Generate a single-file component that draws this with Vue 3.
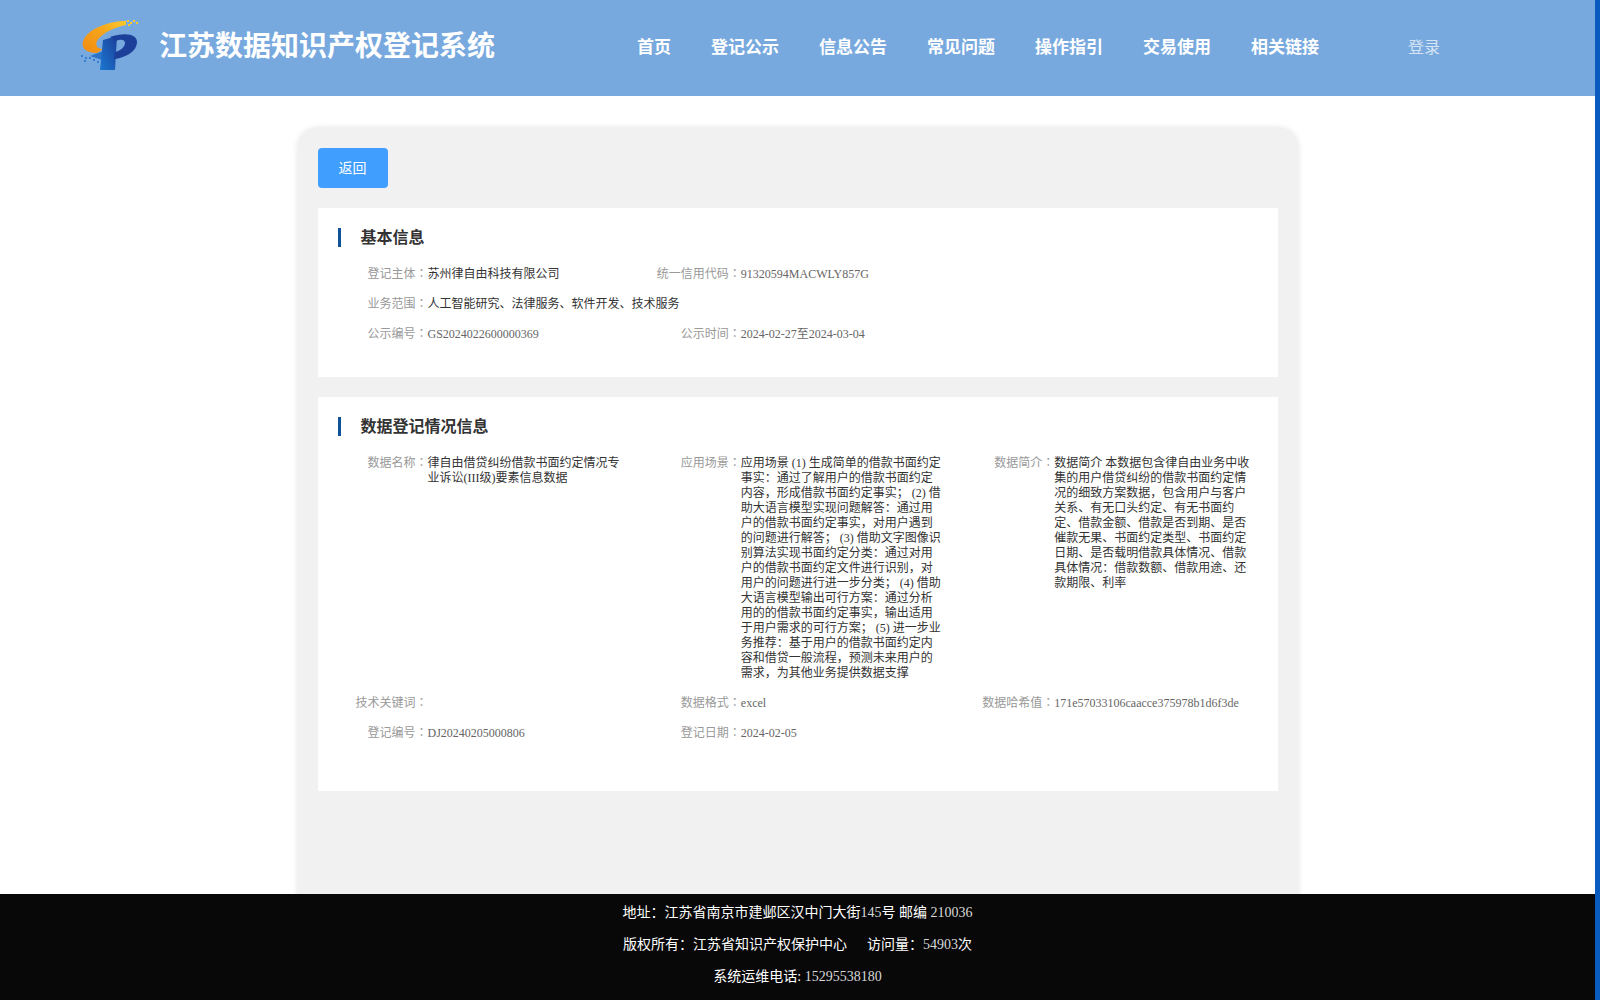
<template>
  <div class="page">
    <div class="main">
      <header class="header">
        <svg class="logo" width="80" height="70" viewBox="0 0 80 70">
          <defs>
            <linearGradient id="swoosh" x1="0" y1="1" x2="1" y2="0">
              <stop offset="0" stop-color="#f08a12" />
              <stop offset="0.6" stop-color="#f6a71c" />
              <stop offset="1" stop-color="#fbcb2c" />
            </linearGradient>
            <linearGradient id="pblue" x1="0" y1="1" x2="1" y2="0">
              <stop offset="0" stop-color="#1a78d0" />
              <stop offset="1" stop-color="#1c3f9a" />
            </linearGradient>
          </defs>
          <path d="M56 11C40 11 18 18 13 31C11 38 16 43 27 43L33 39C28 39 25 36 27 31C31 24 42 18 56 15Z" fill="url(#swoosh)" />
          <path d="M20 46L33 41L32 50Z" fill="#2b74c8" />
          <path d="M33 30L47 26L45 60H30Z" fill="url(#pblue)" />
          <path d="M40 27C55 22 68 24 67 33C66 42 55 48 44 49L45 42C50 41 55 37 55 33C55 29 50 29 46 31Z" fill="#1c3f9a" />
          <g fill="#fbcb2c">
            <rect x="57" y="10" width="2" height="2" />
            <rect x="60" y="12" width="2" height="2" />
            <rect x="63" y="10" width="2" height="2" />
            <rect x="66" y="12" width="2" height="2" />
            <rect x="58" y="14" width="2" height="2" />
          </g>
          <g fill="#2f7fd6">
            <rect x="11" y="45" width="2" height="2" />
            <rect x="15" y="47" width="2" height="2" />
            <rect x="19" y="47" width="2" height="2" />
            <rect x="23" y="49" width="2" height="2" />
            <rect x="14" y="50" width="2" height="2" />
            <rect x="27" y="51" width="2" height="2" />
          </g>
        </svg>
        <h1 class="site-title">江苏数据知识产权登记系统</h1>
        <nav class="nav">
          <a v-for="item in navItems" :key="item" class="nav-item">{{ item }}</a>
        </nav>
        <a class="login">登录</a>
      </header>

      <div class="content">
        <div class="card">
          <button class="back-btn">返回</button>

          <section class="panel">
            <h2 class="panel-title">基本信息</h2>
            <div class="rows">
              <div v-for="(cell, index) in basicInfo" :key="index" class="cell" :class="{ wide: cell.wide, 'new-row': cell.newRow }">
                <span class="label">{{ cell.label }}<span class="colon">：</span></span>
                <span class="value" :class="{ muted: cell.muted }">{{ cell.value }}</span>
              </div>
            </div>
          </section>

          <section class="panel panel-data">
            <h2 class="panel-title">数据登记情况信息</h2>
            <div class="rows">
              <div v-for="(cell, index) in dataInfo" :key="index" class="cell">
                <span class="label">{{ cell.label }}<span class="colon">：</span></span>
                <span class="value" :class="{ muted: cell.muted }">{{ cell.value }}</span>
              </div>
            </div>
          </section>
        </div>
      </div>

      <footer class="footer">
        <p>地址：江苏省南京市建邺区汉中门大街<span class="num">145</span>号 邮编 <span class="num">210036</span></p>
        <p>版权所有：江苏省知识产权保护中心<span class="visits">访问量：<span class="num">54903</span>次</span></p>
        <p>系统运维电话: <span class="num">15295538180</span></p>
      </footer>
    </div>
    <div class="edge"></div>
  </div>
</template>

<script setup>
const navItems = ['首页', '登记公示', '信息公告', '常见问题', '操作指引', '交易使用', '相关链接'];

const basicInfo = [
  { label: '登记主体', value: '苏州律自由科技有限公司' },
  { label: '统一信用代码', value: '91320594MACWLY857G', muted: true },
  { label: '业务范围', value: '人工智能研究、法律服务、软件开发、技术服务', wide: true, newRow: true },
  { label: '公示编号', value: 'GS2024022600000369', newRow: true, muted: true },
  { label: '公示时间', value: '2024-02-27至2024-03-04', muted: true }
];

const dataInfo = [
  { label: '数据名称', value: '律自由借贷纠纷借款书面约定情况专业诉讼(III级)要素信息数据' },
  {
    label: '应用场景',
    value: '应用场景 (1) 生成简单的借款书面约定事实：通过了解用户的借款书面约定内容，形成借款书面约定事实； (2) 借助大语言模型实现问题解答：通过用户的借款书面约定事实，对用户遇到的问题进行解答； (3) 借助文字图像识别算法实现书面约定分类：通过对用户的借款书面约定文件进行识别，对用户的问题进行进一步分类； (4) 借助大语言模型输出可行方案：通过分析用的的借款书面约定事实，输出适用于用户需求的可行方案； (5) 进一步业务推荐：基于用户的借款书面约定内容和借贷一般流程，预测未来用户的需求，为其他业务提供数据支撑'
  },
  {
    label: '数据简介',
    value: '数据简介 本数据包含律自由业务中收集的用户借贷纠纷的借款书面约定情况的细致方案数据，包含用户与客户关系、有无口头约定、有无书面约定、借款金额、借款是否到期、是否催款无果、书面约定类型、书面约定日期、是否载明借款具体情况、借款具体情况：借款数额、借款用途、还款期限、利率'
  },
  { label: '技术关键词', value: '' },
  { label: '数据格式', value: 'excel', muted: true },
  { label: '数据哈希值', value: '171e57033106caacce375978b1d6f3de', muted: true },
  { label: '登记编号', value: 'DJ20240205000806', muted: true },
  { label: '登记日期', value: '2024-02-05', muted: true }
];
</script>

<style scoped>
.page {
  display: flex;
  height: 100vh;
  overflow: hidden;
  font-family: "Liberation Serif", "Noto Sans CJK SC", serif;
}

.main {
  position: relative;
  flex: 1;
  min-width: 0;
  background: #fff;
}

.edge {
  width: 5px;
  background: #0a5bc0;
}

.header {
  display: flex;
  align-items: center;
  height: 96px;
  padding: 0 0 6px 70px;
  box-sizing: border-box;
  background: #78a9de;
  color: #fff;
}

.logo {
  flex-shrink: 0;
}

.site-title {
  margin: 0 0 2px 9px;
  font-size: 28px;
  font-weight: 700;
  white-space: nowrap;
}

.nav {
  display: flex;
  gap: 40px;
  margin: 0 0 0 142px;
}

.nav-item {
  font-size: 17px;
  font-weight: 700;
  white-space: nowrap;
}

.login {
  margin: 2px 0 0 89px;
  font-size: 16px;
  color: rgba(255, 255, 255, 0.7);
}

.content {
  display: flex;
  justify-content: center;
  padding-top: 32px;
}

.card {
  width: 1000px;
  height: 900px;
  padding: 20px;
  box-sizing: border-box;
  background: #f1f1f1;
  border-radius: 20px;
  box-shadow: 0 0 6px rgba(0, 0, 0, 0.12);
}

.back-btn {
  display: block;
  width: 70px;
  height: 40px;
  margin-bottom: 20px;
  padding: 0 0 2px;
  border: none;
  border-radius: 4px;
  background: #409eff;
  color: #fff;
  font-family: inherit;
  font-size: 14px;
}

.panel {
  margin-bottom: 20px;
  padding: 20px 10px 5px;
  background: #fff;
}

.panel-data {
  padding-bottom: 20px;
}

.panel-title {
  height: 19px;
  margin: 0 0 20px 10px;
  padding-left: 20px;
  border-left: 3px solid #0f5298;
  font-size: 16px;
  font-weight: 700;
  line-height: 19px;
  color: #333;
}

.rows {
  display: grid;
  grid-template-columns: repeat(3, 1fr);
  padding-bottom: 15px;
  font-size: 12px;
  line-height: 15px;
}

.cell {
  display: flex;
  margin-bottom: 15px;
}

.cell.new-row {
  grid-column: 1;
}

.cell.wide {
  grid-column: 1 / -1;
}

.label {
  flex-shrink: 0;
  width: 100px;
  text-align: right;
  color: #999;
}

/* centred full-width colon, the SC face pushes it to the left */
.colon {
  font-family: "Liberation Serif", "Noto Sans CJK TC", sans-serif;
}

.value {
  width: 200px;
  color: #333;
}

.value.muted {
  color: #666;
}

.cell.wide .value {
  width: auto;
}

.footer {
  position: absolute;
  left: 0;
  right: 0;
  bottom: 0;
  height: 106px;
  padding-top: 3px;
  box-sizing: border-box;
  background: #080808;
  color: #fff;
  font-size: 14px;
  line-height: 32px;
  text-align: center;
}

.footer p {
  margin: 0;
}

.num {
  color: #d8d8d8;
}

.visits {
  margin-left: 20px;
}
</style>

<style>
html,
body {
  margin: 0;
  overflow: hidden;
}
</style>
